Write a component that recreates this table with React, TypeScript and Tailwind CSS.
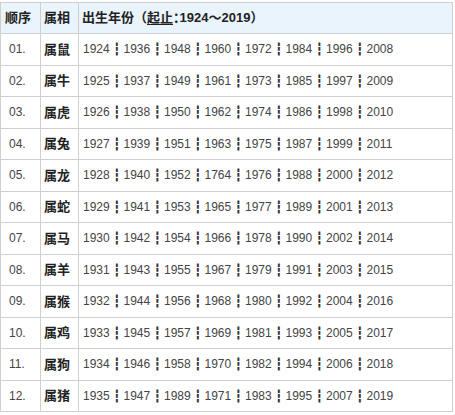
const rows: [string, string, number[]][] = [
  ["01.", "属鼠", [1924, 1936, 1948, 1960, 1972, 1984, 1996, 2008]],
  ["02.", "属牛", [1925, 1937, 1949, 1961, 1973, 1985, 1997, 2009]],
  ["03.", "属虎", [1926, 1938, 1950, 1962, 1974, 1986, 1998, 2010]],
  ["04.", "属兔", [1927, 1939, 1951, 1963, 1975, 1987, 1999, 2011]],
  ["05.", "属龙", [1928, 1940, 1952, 1764, 1976, 1988, 2000, 2012]],
  ["06.", "属蛇", [1929, 1941, 1953, 1965, 1977, 1989, 2001, 2013]],
  ["07.", "属马", [1930, 1942, 1954, 1966, 1978, 1990, 2002, 2014]],
  ["08.", "属羊", [1931, 1943, 1955, 1967, 1979, 1991, 2003, 2015]],
  ["09.", "属猴", [1932, 1944, 1956, 1968, 1980, 1992, 2004, 2016]],
  ["10.", "属鸡", [1933, 1945, 1957, 1969, 1981, 1993, 2005, 2017]],
  ["11.", "属狗", [1934, 1946, 1958, 1970, 1982, 1994, 2006, 2018]],
  ["12.", "属猪", [1935, 1947, 1989, 1971, 1983, 1995, 2007, 2019]],
];

const cjk = "font-['Liberation_Sans','Noto_Sans_CJK_SC',sans-serif]";

export default function App() {
  return (
    <div className={`w-[455px] h-[415px] bg-white pt-[2px] text-[#333] ${cjk}`}>
      <table className="w-[453px] border-collapse table-fixed">
        <colgroup>
          <col className="w-[40px]" />
          <col className="w-[38px]" />
          <col />
        </colgroup>
        <thead>
          <tr className="h-[31px] bg-[#eaf4fc]">
            <th className="border border-[#cfcfcf] pl-[4px] text-left text-[13px] font-bold text-[#222]">顺序</th>
            <th className="border border-[#cfcfcf] pl-[3px] text-left text-[13px] font-bold text-[#222]">属相</th>
            <th className="border border-[#cfcfcf] pl-[3px] text-left text-[13px] font-bold text-[#222] whitespace-nowrap">
              出生年份（<span className="underline underline-offset-2">起止</span>
              <span className="[font-feature-settings:'halt']">：</span>1924～2019
              <span className="[font-feature-settings:'halt']">）</span>
            </th>
          </tr>
        </thead>
        <tbody>
          {rows.map(([n, z, ys]) => (
            <tr key={n} className="h-[31.5px]">
              <td className="border border-[#cfcfcf] pl-[8px] text-[12px] text-[#444]">{n}</td>
              <td className="border border-[#cfcfcf] pl-[3px] text-[13px] font-bold text-[#222]">{z}</td>
              <td className="border border-[#cfcfcf] pl-[4px] text-[12px] text-[#444] whitespace-nowrap">
                {ys.map((y, i) => (
                  <span key={i}>
                    {i > 0 && (
                      <span className="inline-block w-[13.8px] text-center font-['DejaVu_Sans',sans-serif] text-[#333]">
                        ┇
                      </span>
                    )}
                    {y}
                  </span>
                ))}
              </td>
            </tr>
          ))}
        </tbody>
      </table>
    </div>
  );
}
